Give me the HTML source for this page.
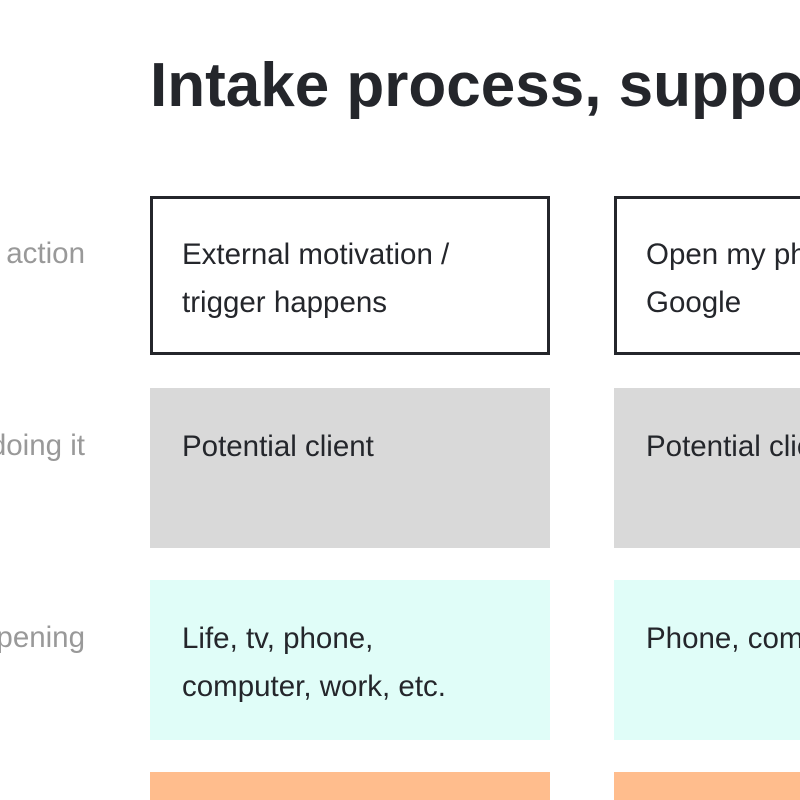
<!DOCTYPE html>
<html><head><style>
html,body{margin:0;width:800px;height:800px;overflow:hidden}
body{background:#fff;font-family:"Liberation Sans",sans-serif;position:relative}
.w{position:absolute;left:0;top:0;width:800px;height:800px;overflow:hidden}
.t{position:absolute;left:150px;top:50px;font-size:62px;font-weight:bold;color:#24262b;white-space:nowrap}
.l{position:absolute;right:715px;font-size:29.5px;color:#999;white-space:nowrap}
.b{position:absolute;box-sizing:border-box;width:400px;height:160px;padding:35px 32px 0;font-size:29.5px;line-height:48px;color:#24262b;white-space:nowrap;overflow:hidden}
.k{border:3px solid #24262b;height:159px;padding:32px 29px 0}
.g{background:#d9d9d9}.c{background:#e0fdf8}.o{background:#ffbd8d}
</style></head><body><div class="w">
<div class="t">Intake process, suppo</div>
<div class="l" style="top:237px">action</div>
<div class="l" style="top:429px">doing it</div>
<div class="l" style="top:621px">pening</div>
<div class="b k" style="left:150px;top:196px">External motivation /<br>trigger happens</div>
<div class="b k" style="left:614px;top:196px;width:186px;border-right:none">Open my phone,<br>Google</div>
<div class="b g" style="left:150px;top:388px">Potential client</div>
<div class="b g" style="left:614px;top:388px;width:186px">Potential client</div>
<div class="b c" style="left:150px;top:580px">Life, tv, phone,<br>computer, work, etc.</div>
<div class="b c" style="left:614px;top:580px;width:186px">Phone, computer</div>
<div class="b o" style="left:150px;top:772px;height:28px"></div>
<div class="b o" style="left:614px;top:772px;height:28px;width:186px"></div>
</div></body></html>
